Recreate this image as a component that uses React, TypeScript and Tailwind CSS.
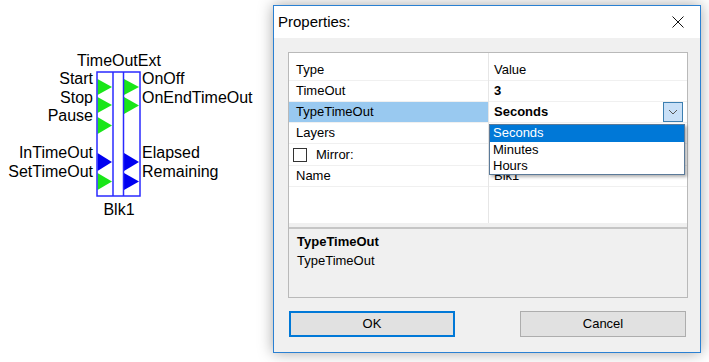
import React from 'react';

const FONT = { fontFamily: '"Liberation Sans", Arial, sans-serif' };

const LEFT_PINS = ['Start', 'Stop', 'Pause', '', 'InTimeOut', 'SetTimeOut'];
const RIGHT_PINS = ['OnOff', 'OnEndTimeOut', '', '', 'Elapsed', 'Remaining'];

const GREEN = '#19e619';
const BLUE = '#0000f0';

// left column triangles (svg coords), [top, bottom, colour]
const LEFT_TRI: [number, number, string][] = [
    [8, 24, GREEN],
    [26, 42, GREEN],
    [46, 63, GREEN],
    [82, 100, BLUE],
    [102, 119, GREEN],
];
const RIGHT_TRI: [number, number, string][] = [
    [8, 24, GREEN],
    [26, 43, GREEN],
    [82, 100, BLUE],
    [102, 119, BLUE],
];

const BlockSymbol = () => (
    <svg width="46" height="127" viewBox="0 0 46 127" className="mt-[1px]">
        {LEFT_TRI.map(([t, b, c], i) => (
            <polygon key={'l' + i} points={`1.5,${t} 16,${(t + b) / 2} 1.5,${b}`} fill={c} />
        ))}
        {RIGHT_TRI.map(([t, b, c], i) => (
            <polygon key={'r' + i} points={`28,${t} 43,${(t + b) / 2} 28,${b}`} fill={c} />
        ))}
        <rect x="1" y="1" width="43" height="124" fill="none" stroke="#2a2aff" strokeWidth="1.5" />
        <line x1="17" y1="1" x2="17" y2="125" stroke="#2a2aff" strokeWidth="1.5" />
        <line x1="27.5" y1="1" x2="27.5" y2="125" stroke="#2a2aff" strokeWidth="1.5" />
    </svg>
);

const Diagram = () => (
    <div className="w-[273px] shrink-0 pt-[51px] flex items-start text-[16px] text-black" style={FONT}>
        {/* entrées */}
        <div className="w-[93px] pt-[19px] text-right leading-[18.6px] whitespace-nowrap">
            {LEFT_PINS.map((p, i) => (
                <div key={i} className="h-[18.6px]">{p}</div>
            ))}
        </div>
        {/* bloc */}
        <div className="w-[46px] ml-[3px] flex flex-col items-center">
            <div className="leading-[19px] whitespace-nowrap">TimeOutExt</div>
            <BlockSymbol />
            <div className="leading-[19px] mt-[2px]">Blk1</div>
        </div>
        {/* sorties */}
        <div className="pt-[19px] leading-[18.6px] whitespace-nowrap">
            {RIGHT_PINS.map((p, i) => (
                <div key={i} className="h-[18.6px]">{p}</div>
            ))}
        </div>
    </div>
);

const Row = ({
    name,
    value,
    h = 'h-[21px]',
    highlight = false,
    bold = false,
    children,
}: {
    name: React.ReactNode;
    value?: React.ReactNode;
    h?: string;
    highlight?: boolean;
    bold?: boolean;
    children?: React.ReactNode;
}) => (
    <div className={`flex ${h} border-b border-[#f0f0f0]`}>
        <div className={`w-[199px] flex items-center pl-[7px] ${highlight ? 'bg-[#99c9f0]' : ''}`}>{name}</div>
        <div className={`relative flex-1 flex items-center pl-[6px] ${bold ? 'font-bold' : ''}`}>
            {value}
            {children}
        </div>
    </div>
);

const PropertiesDialog = () => (
    <div
        className="mt-[5px] w-[428px] h-[348px] border border-[#2a80d2] bg-[#f0f0f0] shadow-[0_0_14px_rgba(0,0,0,0.35)] flex flex-col text-black"
        style={FONT}
    >
        {/* barre de titre */}
        <div className="h-[32px] bg-white flex items-center justify-between pl-[4px] pr-[16px] text-[15px]">
            <span>Properties:</span>
            <svg width="12" height="12" viewBox="0 0 12 12">
                <path d="M0.5 0.5 L11.5 11.5 M11.5 0.5 L0.5 11.5" stroke="#111" strokeWidth="1" />
            </svg>
        </div>

        <div className="flex-1 pl-[14px] pr-[12px] pt-[14px] flex flex-col">
            {/* grille de propriétés */}
            <div className="h-[246px] border border-[#b9b9b9] flex flex-col text-[13px]">
                <div className="relative h-[170px] bg-white pt-[6px]">
                    <div className="absolute left-[199px] top-0 bottom-0 w-px bg-[#e6e6e6]" />
                    <Row name="Type" value="Value" h="h-[22px]" />
                    <Row name="TimeOut" value="3" bold />
                    <Row name="TypeTimeOut" value="Seconds" bold highlight>
                        <div className="absolute right-[4px] top-0 w-[20px] h-[20px] border border-[#3c7fb1] bg-[#c9e0f7] flex items-center justify-center">
                            <svg width="10" height="6" viewBox="0 0 10 6">
                                <path d="M1 1 L5 5 L9 1" fill="none" stroke="#555" strokeWidth="1" />
                            </svg>
                        </div>
                    </Row>
                    <Row name="Layers" />
                    <Row
                        h="h-[22px]"
                        name={
                            <div className="flex items-center">
                                <div className="w-[14px] h-[14px] border border-[#333] bg-white -ml-[3px]" />
                                <span className="ml-[9px]">Mirror:</span>
                            </div>
                        }
                    />
                    <Row name="Name" value="Blk1" />

                    {/* liste déroulante */}
                    <div className="absolute left-[200px] top-[71px] w-[196px] h-[51px] border border-[#5b7a99] bg-white shadow-[2px_2px_3px_rgba(0,0,0,0.3)] flex flex-col leading-[16.5px]">
                        <div className="h-[16.5px] bg-[#0078d7] text-white pl-[3px]">Seconds</div>
                        <div className="h-[16.5px] pl-[3px]">Minutes</div>
                        <div className="h-[16.5px] pl-[3px]">Hours</div>
                    </div>
                </div>
                <div className="h-[4px]" />
                <div className="h-[2px] bg-[#c5c5c5]" />
                <div className="pl-[8px] pt-[3px] leading-[19px]">
                    <div className="font-bold">TypeTimeOut</div>
                    <div>TypeTimeOut</div>
                </div>
            </div>

            {/* boutons */}
            <div className="mt-[13px] flex justify-between text-[13px]">
                <button className="w-[166px] h-[26px] border-2 border-[#0078d7] bg-[#e1e1e1] ml-[1px]">OK</button>
                <button className="w-[166px] h-[26px] border border-[#adadad] bg-[#e1e1e1] mr-[2px]">Cancel</button>
            </div>
        </div>
    </div>
);

export default function App() {
    return (
        <div className="w-[709px] h-[362px] bg-white flex overflow-hidden">
            <Diagram />
            <PropertiesDialog />
        </div>
    );
}
